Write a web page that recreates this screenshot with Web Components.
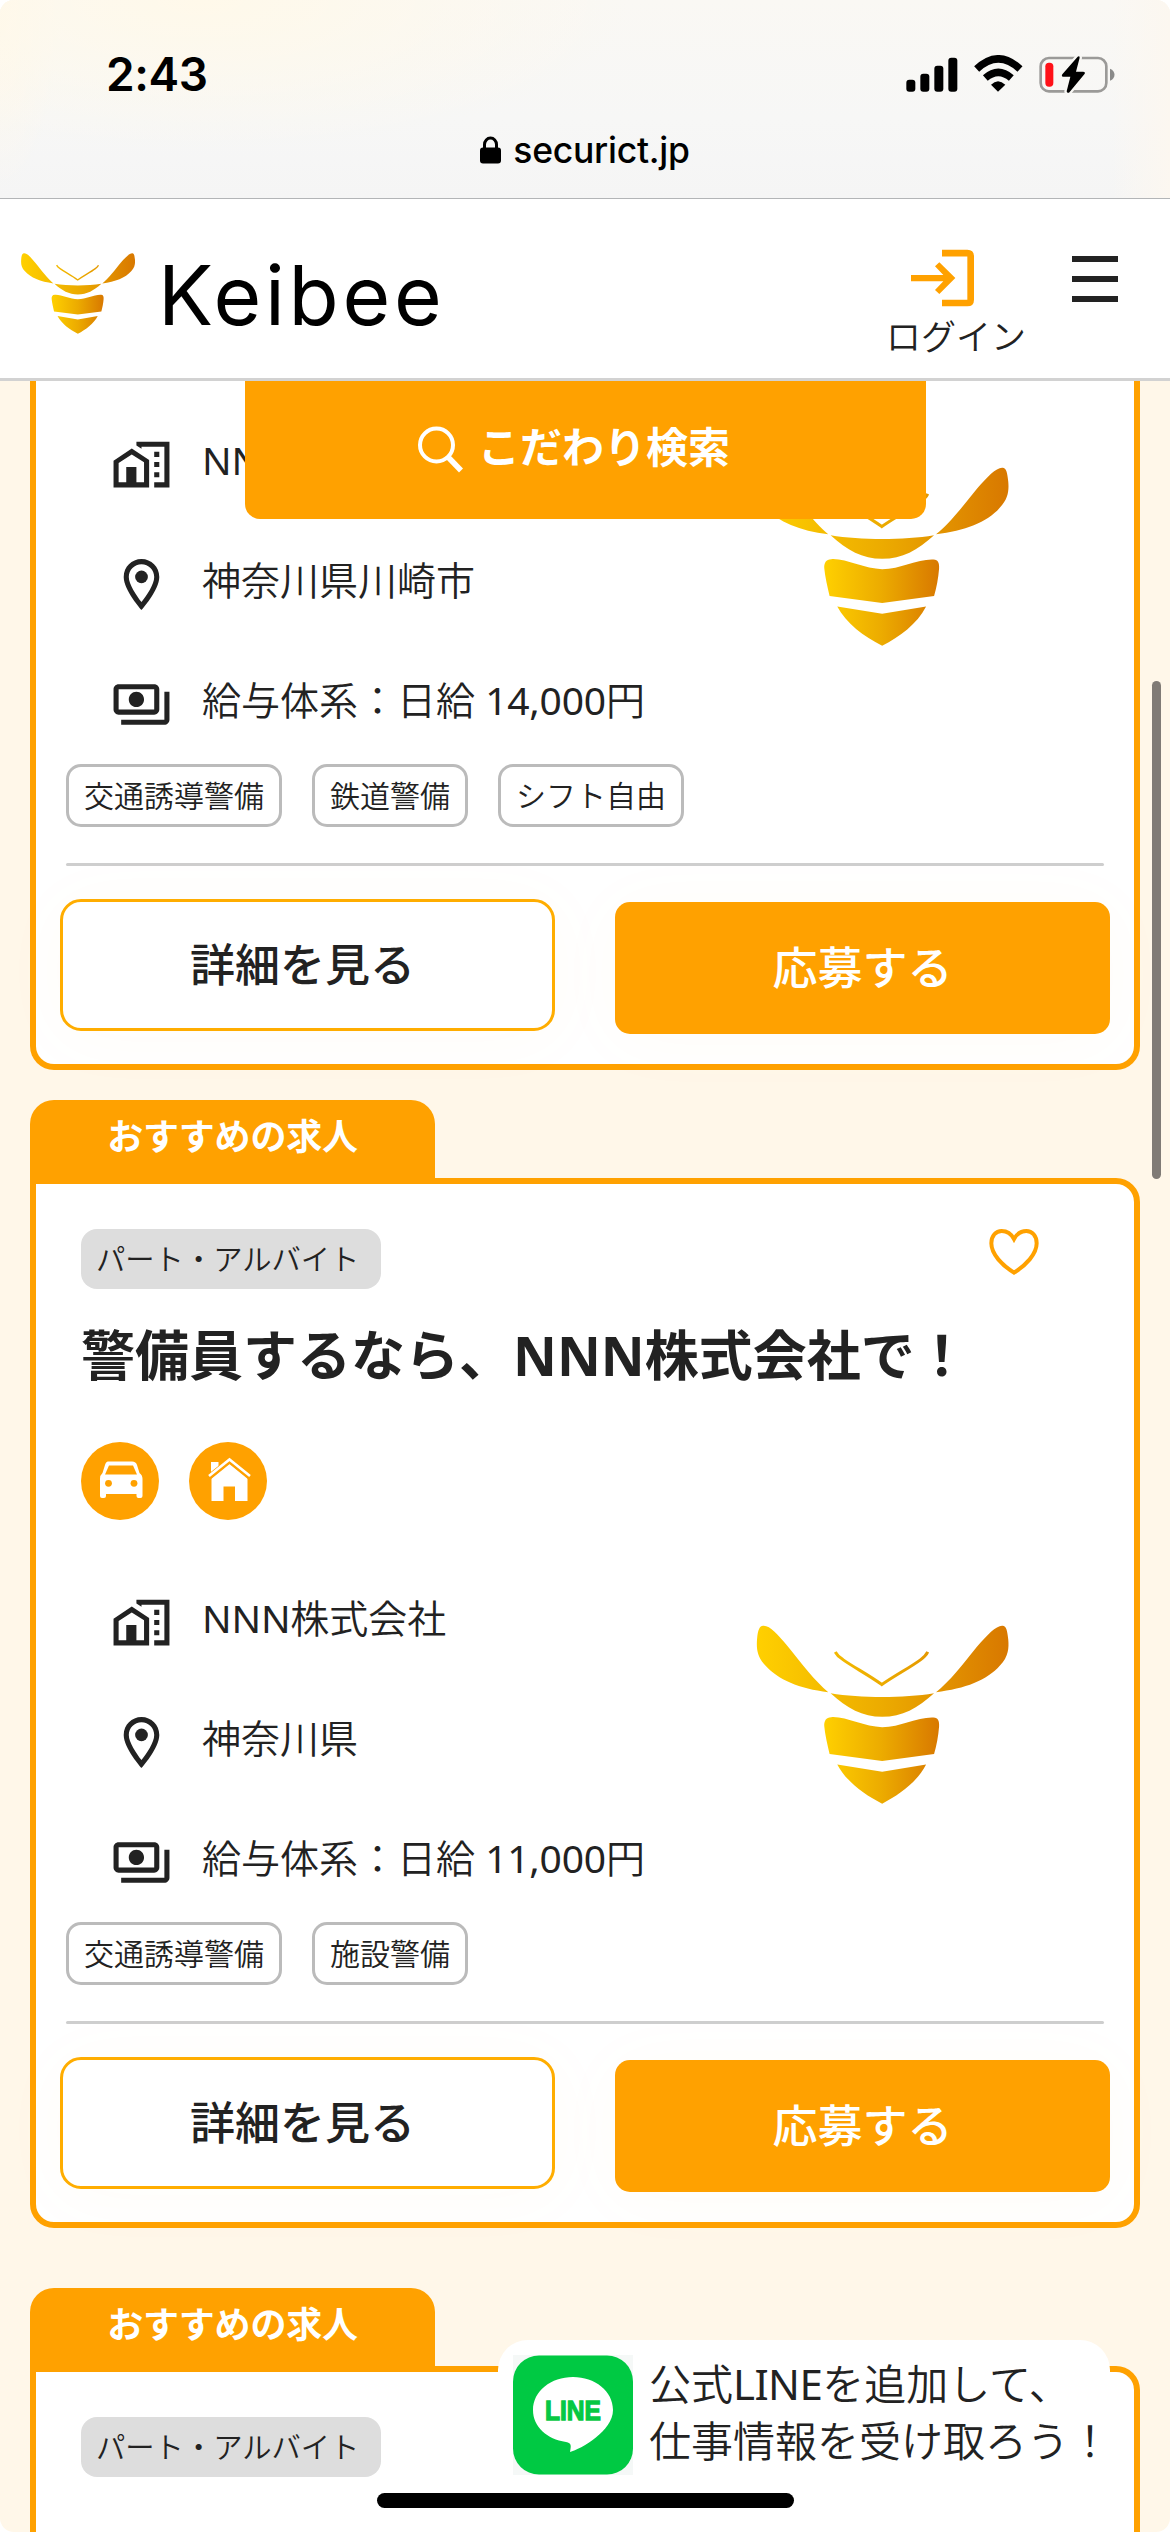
<!DOCTYPE html>
<html lang="ja">
<head>
<meta charset="utf-8">
<title>Keibee</title>
<style>
html,body{margin:0;padding:0;background:#fff}
body{font-family:"Noto Sans","Noto Sans CJK JP",sans-serif;color:#222;font-weight:350}
</style>
</head>
<body>
<kb-app></kb-app>
<script>
const define=(name,html,setup)=>customElements.define(name,class extends HTMLElement{
  constructor(){super();this.attachShadow({mode:'open'});}
  connectedCallback(){
    const t=document.createElement('template');
    t.innerHTML=typeof html==='function'?html(this):html;
    this.shadowRoot.replaceChildren(t.content.cloneNode(true));
    if(setup)setup(this);
  }
});

define('kb-bee',`<style>:host{display:block}svg{display:block;width:100%;height:100%}</style>
<svg viewBox="100 130 770 550">
<defs>
<linearGradient id="a" gradientUnits="userSpaceOnUse" x1="107" x2="864" y1="0" y2="0"><stop offset="0" stop-color="#ffd000"/><stop offset=".5" stop-color="#ecab00"/><stop offset="1" stop-color="#d87800"/></linearGradient>
<linearGradient id="b" gradientUnits="userSpaceOnUse" x1="310" x2="656" y1="0" y2="0"><stop offset="0" stop-color="#ffd000"/><stop offset=".5" stop-color="#ecab00"/><stop offset="1" stop-color="#d87800"/></linearGradient>
</defs>
<g fill="url(#a)">
<path d="M322 338C235 328 170 300 133 258C107 230 106 205 108 178C110 150 116 138 126 138C146 136 170 163 200 200C240 250 285 308 322 338Z"/>
<path d="M646 338C733 328 800 302 838 258C864 230 865 205 863 180C860 152 857 139 846 138C828 136 800 165 770 200C730 250 685 308 646 338Z"/>
<path d="M329 341C420 356 548 356 640 341C590 386 545 412 484 412C425 412 378 386 329 341Z"/>
</g>
<path d="M343 217Q350 230 366 240C400 264 440 284 483 315C528 284 566 265 600 240Q616 228 621 217" fill="none" stroke="url(#a)" stroke-width="9"/>
<g fill="url(#b)">
<path d="M331 413C375 410 430 443 484 443C540 443 590 412 638 414C653 415 656 425 655 442C653 470 647 500 640 524L484 545L326 524C320 497 312 465 310 440C309 424 315 414 331 413Z"/>
<path d="M349 555L484 577L616 555C588 609 537 645 484 673C429 645 375 605 349 555Z"/>
</g></svg>`);

define('kb-status',`<style>
:host{display:flex;flex-direction:column;box-sizing:border-box;height:199px;border-bottom:1px solid #b3b5b7;font-family:Inter,"Noto Sans",sans-serif;color:#000;
background:radial-gradient(ellipse 430px 150px at 200px 0,#fff9ea 0,#fff9ea00 100%),radial-gradient(ellipse 60px 190px at 0 0,#fff8ea 0,#fff8ea00 100%),linear-gradient(270deg,#fcf7f0 0,#fcf7f000 5%),linear-gradient(#faf8f4,#f7f7f6 60%,#f5f5f5)}
.top{display:flex;justify-content:space-between;align-items:center;height:148px;box-sizing:border-box;padding:0 55px 0 106px}
.time{font-weight:600;font-size:46px;line-height:60px;letter-spacing:-.4px}
.top svg{width:209px;height:38px}
.url{display:flex;justify-content:center;align-items:center;gap:12px;margin-top:-20px;height:44px;font-size:35.5px;font-weight:500;letter-spacing:-.25px}
.url svg{width:21px;height:28px}
</style>
<div class="top"><span class="time">2:43</span>
<svg viewBox="50 43 627 114">
<rect x="51" y="117" width="27" height="36" rx="9"/><rect x="93" y="99" width="27" height="54" rx="9"/><rect x="135" y="75" width="27" height="78" rx="9"/><rect x="177" y="51" width="27" height="102" rx="9"/>
<path d="M326 153L305 132Q326 111 348 132Z"/>
<path d="M288 112Q327 78 366 112" fill="none" stroke="#000" stroke-width="22"/>
<path d="M262 85Q327 24 392 85" fill="none" stroke="#000" stroke-width="22"/>
<rect x="454" y="52" width="197" height="100" rx="25" fill="none" stroke="#9b9a98" stroke-width="8"/>
<rect x="468" y="66" width="24" height="72" rx="11" fill="#ff1118"/>
<path d="M662 84C680 91 680 113 662 120Z" fill="#8a8a89"/>
<path d="M565 48L519 101Q515 108 522 108L543 108L532 152Q533 158 539 156L585 101Q590 94 582 93L560 93L571 51Q571 45 565 48Z" stroke="#f8f7f4" stroke-width="14"/>
<path d="M565 48L519 101Q515 108 522 108L543 108L532 152Q533 158 539 156L585 101Q590 94 582 93L560 93L571 51Q571 45 565 48Z"/>
</svg></div>
<div class="url"><svg viewBox="0 0 21 28"><rect y="11.500" width="21" height="16" rx="3"/><path d="M4.500 14V8.500a6 6.500 0 0 1 12 0V14" fill="none" stroke="#000" stroke-width="3"/></svg><span>securict.jp</span></div>`);

define('kb-header',`<style>
:host{display:flex;justify-content:space-between;box-sizing:border-box;height:182px;border-bottom:3px solid #d2d2d2;background:#fff;padding:0 52px 0 20px}
.logo{display:flex;padding-top:53px}
kb-bee{width:116px;height:83px}
.name{font:400 82px/100px Inter,sans-serif;letter-spacing:3.7px;color:#000;margin:-6px 0 0 22px}
.right{display:flex;gap:41px}
.login{display:flex;flex-direction:column;align-items:center;width:150px;padding-top:50px;font-size:35px;line-height:44px;white-space:nowrap}
.login svg{width:63px;height:58px;margin:0 28px 8px 0}
.menu{display:flex;flex-direction:column;gap:14px;padding-top:57px}
.menu i{width:46px;height:6px;background:#222}
</style>
<div class="logo"><kb-bee></kb-bee><span class="name">Keibee</span></div>
<div class="right"><div class="login">
<svg viewBox="156 56 189 172" fill="#ffa100"><path d="M249 67.500H325Q335 67.500 335 77.500V207Q335 217 325 217H249" fill="none" stroke="#ffa100" stroke-width="20"/><path d="M156 133H253L228 107L241 95L289 142L241 190L228 178L253 152H156Z"/></svg>
<span>ログイン</span></div><div class="menu"><i></i><i></i><i></i></div></div>`);

const icons={
office:'<path d="M17 15h2v2h-2zM17 11h2v2h-2zM17 7h2v2h-2z"/><path d="M10 3v1.510l2 1.330V5h9v14h-4v2h6V3z"/><path d="M8.170 5.700L15 10.250V21H1V10.480L8.170 5.700zM10 19h3v-7.840L8.170 8.090 3 11.380V19h3v-6h4v6z" fill-rule="evenodd"/>',
pin:'<path d="M12 2C8.130 2 5 5.130 5 9c0 5.250 7 13 7 13s7-7.750 7-13c0-3.870-3.130-7-7-7zM7 9c0-2.760 2.240-5 5-5s5 2.240 5 5c0 2.880-2.880 7.190-5 9.880C9.920 16.210 7 11.850 7 9z"/><circle cx="12" cy="9" r="2.500"/>',
pay:'<path d="M19 14V6c0-1.100-.9-2-2-2H3c-1.100 0-2 .9-2 2v8c0 1.100.9 2 2 2h14c1.100 0 2-.9 2-2zm-2 0H3V6h14v8zm-7-7c-1.660 0-3 1.340-3 3s1.340 3 3 3 3-1.340 3-3-1.340-3-3-3zm13 0v11c0 1.100-.9 2-2 2H4v-2h17V7h2z"/>'};
define('kb-row',el=>`<style>
:host{display:flex;align-items:center;gap:30px;height:60px;font-size:39px;white-space:nowrap}
svg{width:61px;height:61px;flex:none;fill:#222}
span{line-height:56px;margin-top:-9px}
</style><svg viewBox="0 0 24 24">${icons[el.getAttribute('icon')]}</svg><span><slot></slot></span>`);

define('kb-tag',`<style>:host{box-sizing:border-box;display:flex;align-items:center;height:63px;padding:0 15px;border:3px solid #bbb;border-radius:15px;font-size:30px;white-space:nowrap;line-height:40px}</style><slot></slot>`);

define('kb-button',`<style>
:host{box-sizing:border-box;display:flex;align-items:center;justify-content:center;width:495px;height:132px;font-weight:500;font-size:45px;line-height:60px;border-radius:15px;background:#ffa100;color:#fff;margin-top:3px;box-shadow:0 6px 70px rgba(255,170,60,.035)}
:host([outline]){background:#fff;color:#222;border:3px solid #ffad00;border-radius:21px;margin:0 0 3px;padding-right:10px}
</style><slot></slot>`);

define('kb-tab',`<style>:host{box-sizing:border-box;display:flex;justify-content:center;width:405px;height:78px;padding-top:12px;border-radius:24px 24px 0 0;background:#ffa100;color:#fff;font-weight:600;font-size:36px;letter-spacing:-.2px;line-height:50px}</style><slot></slot>`);

define('kb-head',`<style>
:host{display:flex;flex-direction:column;padding:45px 0 72px 45px}
.top{display:flex;justify-content:space-between;padding-right:95px}
.badge{display:flex;align-items:center;box-sizing:border-box;width:300px;height:60px;padding:0 15px;border-radius:16px;background:#ddd;font-size:29.3px;line-height:40px;white-space:nowrap}
.heart{width:50px;height:46px}
h2{margin:27px 0 48px;font-size:54px;line-height:78px;height:78px;font-weight:700;white-space:nowrap}
.perks{display:flex;gap:30px}
.perks svg{width:78px;height:78px}
</style>
<div class="top"><span class="badge">パート・アルバイト</span>
<svg class="heart" viewBox="42 41 150 138"><path d="M117 172C82 150 49 117 49 84C49 61 63 47 80 47C97 47 109 56 117 71C125 56 137 47 154 47C171 47 185 61 185 84C185 117 152 150 117 172Z" fill="none" stroke="#ffa100" stroke-width="12"/></svg></div>
<h2><slot></slot></h2>
<div class="perks">
<svg viewBox="0 0 78 78"><circle cx="39" cy="39" r="39" fill="#ffa100"/><path d="M27 19.500H51Q55 19.500 56 23L58.500 31Q61.500 33 61.500 37V54Q61.500 56 59.500 56H57.500Q55.500 56 55.500 54V52H25V54Q25 56 23 56H21Q19 56 19 54V37Q19 33 21.500 31L24 23Q25 19.500 27 19.500Z" fill="#fff"/><path d="M28 23.500H52L56 32.500H24Z" fill="#ffa100"/><circle cx="27.500" cy="41.300" r="3.400" fill="#ffa100"/><circle cx="53" cy="41.300" r="3.400" fill="#ffa100"/></svg>
<svg viewBox="0 0 78 78"><circle cx="39" cy="39" r="39" fill="#ffa100"/><path d="M22 20H29.500V25L22 32ZM40.500 21.500L58.500 36V59H46V44.500H34.500V59H22.500V36Z" fill="#fff"/><path d="M19.500 35.500L40.500 18.500L61.500 35.500" fill="none" stroke="#ffa100" stroke-width="5.500"/><path d="M20 34L40.500 17.500L61 34" fill="none" stroke="#fff" stroke-width="2.600"/></svg>
</div>`);

define('kb-card',`<style>
:host{box-sizing:border-box;display:flex;flex-direction:column;border:6px solid #ffa100;border-radius:0 24px 24px 24px;background:#fff;height:1050px}
:host([partial]){border-top:0;border-radius:0 0 24px 24px;height:689px;padding-top:53px}
:host([cut]){height:166px;border-bottom:0;border-radius:0 24px 0 0}
.info{display:flex;height:300px}
.rows{display:flex;flex-direction:column;gap:60px;padding-left:75px;width:643px}
kb-bee{width:257px;height:183px;margin-top:31px;flex:none}
.tags{display:flex;gap:30px;padding:30px 0 36px 30px}
hr{margin:0 30px;border:0;height:3px;background:#cecece;border-radius:2px;flex:none}
.actions{display:flex;justify-content:space-between;padding:33px 24px 0}
</style><slot name="head"></slot>
<div class="body"><div class="info"><div class="rows"><slot name="row"></slot></div><kb-bee></kb-bee></div>
<div class="tags"><slot name="tag"></slot></div><hr>
<div class="actions"><kb-button outline>詳細を見る</kb-button><kb-button>応募する</kb-button></div></div>`,
el=>{if(el.hasAttribute('cut'))el.shadowRoot.querySelector('.body').remove();});

define('kb-search',`<style>:host{position:absolute;left:245px;top:0;box-sizing:border-box;width:681px;height:138px;background:#ffa100;border-radius:0 0 15px 15px;color:#fff;display:flex;gap:14px;padding:38px 0 0 172px;font-size:42px;line-height:56px;font-weight:700}
svg{width:47px;height:48px;margin-top:6px}</style>
<svg viewBox="0 0 47 48" fill="none" stroke="#fff"><circle cx="19.500" cy="20" r="16.500" stroke-width="4"/><path d="M31 32L44 45.500" stroke-width="5.500"/></svg><slot></slot>`);

define('kb-line',`<style>
:host{position:absolute;left:498px;bottom:42px;width:612px;height:150px;box-sizing:border-box;padding:15px;border-radius:30px;background:#fff;display:flex;gap:16px;font-size:42px;line-height:57px;white-space:nowrap}
svg{width:120px;height:120px;flex:none}
p{margin:0}
b{font-weight:400;letter-spacing:-.6px}
text{font:700 28px "Liberation Sans",sans-serif;fill:#06c843;stroke:#06c843;stroke-width:1.300}
</style><svg viewBox="0 0 120 120"><rect width="120" height="120" fill="#f5f8f7"/><rect y=".5" width="120" height="119" rx="26" fill="#00c943"/><path d="M60 22C38 22 20 36 20 55C20 72 34 84 53 87C59 88 58 91 57 97C68 94 100 76 100 55C100 36 82 22 60 22Z" fill="#fff"/><text x="32" y="65" textLength="56" lengthAdjust="spacingAndGlyphs">LINE</text></svg>
<p>公式<b>LINE</b>を追加して、<br>仕事情報を受け取ろう！</p>`);

define('kb-app',`<style>
:host{display:flex;flex-direction:column;position:relative;width:1170px;height:2532px;overflow:hidden;background:#fff7e9;border-radius:14px}
main{position:relative;display:flex;flex-direction:column;padding:0 30px;height:2151px;flex:none}
b{font-weight:400;letter-spacing:-.2px}
.second{margin-top:30px}.third{margin-top:60px}
.scroll{position:absolute;right:9px;top:300px;width:9px;height:498px;border-radius:5px;background:#807b76}
.home{position:absolute;left:377px;bottom:24px;width:417px;height:15px;border-radius:8px;background:#000}
</style>
<kb-status></kb-status><kb-header></kb-header>
<main>
<kb-card partial>
<kb-row slot="row" icon="office"><b>NNN</b>株式会社</kb-row><kb-row slot="row" icon="pin">神奈川県川崎市</kb-row><kb-row slot="row" icon="pay">給与体系：日給 <b>14,000</b>円</kb-row>
<kb-tag slot="tag">交通誘導警備</kb-tag><kb-tag slot="tag">鉄道警備</kb-tag><kb-tag slot="tag">シフト自由</kb-tag>
</kb-card>
<kb-tab class="second">おすすめの求人</kb-tab>
<kb-card>
<kb-head slot="head">警備員するなら、NNN株式会社で！</kb-head>
<kb-row slot="row" icon="office"><b>NNN</b>株式会社</kb-row><kb-row slot="row" icon="pin">神奈川県</kb-row><kb-row slot="row" icon="pay">給与体系：日給 <b>11,000</b>円</kb-row>
<kb-tag slot="tag">交通誘導警備</kb-tag><kb-tag slot="tag">施設警備</kb-tag>
</kb-card>
<kb-tab class="third">おすすめの求人</kb-tab>
<kb-card cut><kb-head slot="head"></kb-head></kb-card>
<kb-search>こだわり検索</kb-search>
<div class="scroll"></div>
</main>
<kb-line></kb-line><div class="home"></div>`);
</script>
</body>
</html>
